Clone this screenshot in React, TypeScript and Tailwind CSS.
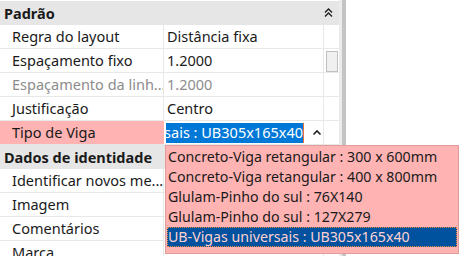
import React from "react";

const font = { fontFamily: '"Noto Sans", "Open Sans", sans-serif' };

function Row({
  label,
  value,
  disabled,
}: {
  label: string;
  value?: string;
  disabled?: boolean;
}) {
  return (
    <div className="flex h-[24px] border-b border-[#e8e8e8]">
      <div
        className={`w-[164px] shrink-0 pl-[12px] flex items-center whitespace-nowrap overflow-hidden border-r border-[#e8e8e8] ${
          disabled ? "text-[#8c8c8c]" : "text-[#1a1a1a]"
        }`}
      >
        {label}
      </div>
      <div
        className={`w-[160px] shrink-0 pl-[3px] flex items-center whitespace-nowrap overflow-hidden border-r border-[#e8e8e8] ${
          disabled ? "text-[#8c8c8c]" : "text-[#1a1a1a]"
        }`}
      >
        {value}
      </div>
      <div className="flex-1" />
    </div>
  );
}

function Header({ title, chevron }: { title: string; chevron?: boolean }) {
  return (
    <div className="flex h-[24px] bg-[#e6e6e6] items-center pl-[4px] font-bold text-[#1a1a1a]">
      <span className="flex-1">{title}</span>
      {chevron && (
        <svg width="9" height="10" viewBox="0 0 9 10" className="mr-[6px]">
          <path d="M1 4.5 L4.5 1 L8 4.5" fill="none" stroke="#222" strokeWidth="1.4" />
          <path d="M1 8.5 L4.5 5 L8 8.5" fill="none" stroke="#222" strokeWidth="1.4" />
        </svg>
      )}
    </div>
  );
}

export default function App() {
  const items = [
    "Concreto-Viga retangular : 300 x 600mm",
    "Concreto-Viga retangular : 400 x 800mm",
    "Glulam-Pinho do sul : 76X140",
    "Glulam-Pinho do sul : 127X279",
    "UB-Vigas universais : UB305x165x40",
  ];
  return (
    <div
      className="relative w-[460px] h-[256px] overflow-hidden bg-white text-[14.5px] leading-none"
      style={font}
    >
      <div className="flex w-[346px] h-full">
        <div className="w-[339px] pt-[1px] relative">
          <Header title="Padrão" chevron />
          <Row label="Regra do layout" value="Distância fixa" />
          <div className="relative">
            <Row label="Espaçamento fixo" value="1.2000" />
            <div className="absolute left-[326px] top-[2px] w-[12px] h-[21px] bg-[#f0f0f0] border border-[#bfbfbf]" />
          </div>
          <Row label="Espaçamento da linh..." value="1.2000" disabled />
          <Row label="Justificação" value="Centro" />
          <div className="flex h-[24px] border-b border-[#e8e8e8]">
            <div className="w-[164px] shrink-0 pl-[12px] flex items-center bg-[#ffb3b3] text-[#1a1a1a] whitespace-nowrap">
              Tipo de Viga
            </div>
            <div className="w-[160px] shrink-0 flex items-center border-r border-[#e8e8e8]">
              <div className="ml-[2px] w-[137px] h-[20px] bg-[#0078d7] text-white overflow-hidden flex items-center justify-end whitespace-nowrap">
                <span>rsais : UB305x165x40</span>
              </div>
              <div className="w-[1px] h-[20px] bg-[#e8743b]" />
              <svg width="10" height="7" viewBox="0 0 10 7" className="ml-[8px]">
                <path d="M1.5 5.5 L5 2 L8.5 5.5" fill="none" stroke="#222" strokeWidth="1.6" />
              </svg>
            </div>
            <div className="flex-1" />
          </div>
          <Header title="Dados de identidade" />
          <Row label="Identificar novos me..." />
          <Row label="Imagem" />
          <Row label="Comentários" />
          <Row label="Marca" />
        </div>
        <div className="w-[3px] bg-[#ebebeb]" />
        <div className="w-[4px] bg-[#c4c4c4]" />
      </div>

      <div className="absolute left-[165px] top-[145px] w-[294px] h-[109px] bg-[#ffb3b3] border border-[#e39c9c] pt-[1px] px-[1px] text-[14.2px]">
        {items.map((it, i) =>
          i === 4 ? (
            <div
              key={it}
              className="h-[20px] flex items-center bg-[#00519e] text-[#ffd2d2] border border-dotted border-[#f08a3c] whitespace-nowrap"
            >
              {it}
            </div>
          ) : (
            <div key={it} className="h-[20px] flex items-center pl-[1px] text-[#1a1a1a] whitespace-nowrap">
              {it}
            </div>
          )
        )}
      </div>
    </div>
  );
}
